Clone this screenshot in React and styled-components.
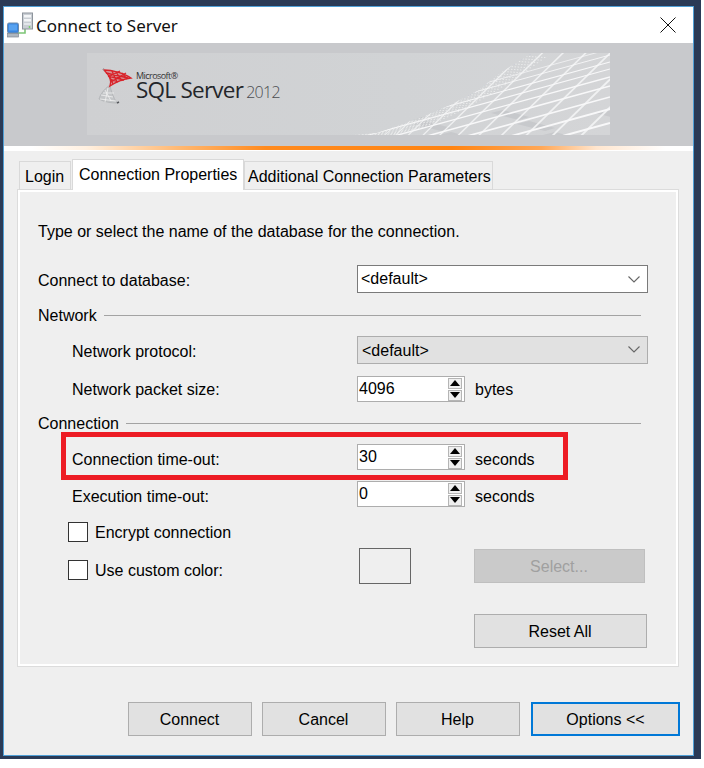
import React from "react";
import styled, { createGlobalStyle } from "styled-components";

const Global = createGlobalStyle`
  html, body { margin: 0; padding: 0; background: #fff; }
  * { box-sizing: border-box; }
  body { font-family: "Liberation Sans", Arial, sans-serif; font-size: 16px; color: #000; }
`;

const Desktop = styled.div`
  width: 701px; height: 759px; background: #2a3a56;
  padding: 6px 7px 3px 3px;
`;
const Win = styled.div`
  width: 691px; height: 750px; border: 1px solid #4f9fd6; background: #efefef;
  display: flex; flex-direction: column; position: relative;
`;
const TitleBar = styled.div`
  height: 36px; background: #fff; display: flex; align-items: center;
  padding: 0 17px 0 3px; flex: none;
`;
const TitleText = styled.div`
  font-family: "Noto Sans", sans-serif; font-size: 17px; margin-left: 0; flex: 1; padding-top: 1px; letter-spacing: -0.03px; color: #111;
`;
const Banner = styled.div`
  height: 103px; background: #c8c9cc; padding: 10px 0 0 83px; flex: none;
`;
const BannerInner = styled.div`
  width: 523px; height: 82px; position: relative;
  background: linear-gradient(90deg, #cfd0d2 0%, #d1d3d5 60%, #d4d5d7 100%);
  display: flex; align-items: flex-start; overflow: hidden;
`;
const Mesh = styled.svg`
  position: absolute; left: 0; top: 0;
`;
const Logo = styled.div`
  display: flex; align-items: flex-start; padding: 14px 0 0 11px; position: relative;
`;
const Brand = styled.div`
  display: flex; flex-direction: column; margin-left: 1px; color: #26282b;
`;
const Microsoft = styled.div`
  font-family: "Open Sans", sans-serif; font-size: 9px; line-height: 10px; letter-spacing: -0.55px; height: 10px; margin-top: 4px; color: #333;
`;
const BrandLine = styled.div`
  display: flex; align-items: baseline; height: 18px; font-family: "Open Sans", sans-serif;
`;
const SqlName = styled.span`
  font-size: 22.5px; line-height: 18px; letter-spacing: -0.75px; color: #24262a;
`;
const Year = styled.span`
  font-size: 16px; line-height: 18px; font-weight: 300; letter-spacing: -0.7px; margin-left: 3px; color: #4a4c50;
`;
const Rule = styled.div`
  height: 5px; flex: none; background: #fff; display: flex;
`;
const RuleGlow = styled.div`
  height: 4px; width: 100%;
  background: linear-gradient(90deg, #fff 4%, #fff0e0 12%, #ffb66e 26%, #ff8a1e 38%, #ff8412 65%, #ffa858 78%, #ffe6cf 86%, #fff 96%);
`;
const Body = styled.div`
  flex: 1; padding: 8px 0 0 13px; display: flex; flex-direction: column;
`;
const Tabs = styled.div`
  display: flex; height: 31px; padding-left: 2px; align-items: flex-end; margin-bottom: -1px; position: relative; z-index: 1;
`;
const Tab = styled.div`
  height: ${p => (p.$active ? 31 : 29)}px;
  width: ${p => p.$w}px;
  margin-left: ${p => (p.$gap ? 1 : 0)}px;
  background: ${p => (p.$active ? "#fff" : "#efefef")};
  border: 1px solid #d9d9d9;
  border-bottom: ${p => (p.$active ? "none" : "1px solid #d9d9d9")};
  display: flex; align-items: center;
  padding: ${p => (p.$active ? "0 0 1px" : "3px 0 0")};
  padding-left: ${p => p.$pad}px;
  white-space: nowrap;
`;
const Panel = styled.div`
  width: 662px; height: 478px; border: 1px solid #dcdcdc; box-shadow: inset 0 0 0 2px #fff;
  padding: 0 30px 0 20px; flex: none; display: flex; flex-direction: column;
`;
const Row = styled.div`
  display: flex; align-items: center; height: ${p => p.$h}px; margin-top: ${p => p.$top}px; flex: none;
  padding-left: ${p => p.$indent || 0}px;
`;
const Intro = styled.div`
  padding-top: 2px; white-space: nowrap;
`;
const Label = styled.div`
  width: ${p => p.$w}px; flex: none; padding-top: ${p => p.$drop || 0}px; white-space: nowrap;
`;
const Heading = styled.div`
  white-space: nowrap; margin-right: 7px; padding-top: 2px;
`;
const HeadLine = styled.div`
  flex: 1; height: 1px; background: #a3a3a3; margin-right: 7px; margin-top: 1px;
`;
const Combo = styled.div`
  width: 291px; height: 28px; flex: none;
  background: ${p => (p.$gray ? "#e1e1e1" : "#fff")};
  border: 1px solid ${p => (p.$gray ? "#adadad" : "#7a7a7a")};
  display: flex; align-items: center; justify-content: space-between;
  padding: ${p => (p.$gray ? "1px 7px 0 4px" : "0 7px 1px 3px")};
`;
const Chevron = styled.svg`
  flex: none; margin-top: ${p => p.$mt}px;
`;
const Spin = styled.div`
  width: 108px; height: 26px; flex: none; background: #fff; border: 1px solid #adadad;
  display: flex; align-items: center; justify-content: space-between; padding: 0 2px 1px 1px;
`;
const SpinValue = styled.div`
  padding-top: 1px;
`;
const SpinBtns = styled.div`
  width: 14px; display: flex; flex-direction: column; gap: 1px; margin-top: 1px;
`;
const SpinBtn = styled.div`
  width: 14px; height: 11px; background: #efefef; border: 1px solid #b5b5b5; display: flex; align-items: center; justify-content: center;
`;
const Unit = styled.div`
  margin-left: 10px; padding-top: ${p => p.$drop || 0}px; white-space: nowrap;
`;
const Check = styled.div`
  width: 20px; height: 20px; background: #fff; border: 1px solid #333; flex: none; margin-right: 7px;
`;
const CheckText = styled.div`
  padding-top: 2px; white-space: nowrap;
`;
const CheckGroup = styled.div`
  display: flex; align-items: center; margin-top: ${p => p.$top || 0}px; width: ${p => p.$w}px; flex: none;
`;
const ColorBox = styled.div`
  width: 52px; height: 36px; border: 1px solid #666; flex: none; margin-right: 63px;
`;
const Button = styled.div`
  width: ${p => p.$w}px; height: 34px; flex: none;
  background: ${p => (p.$off ? "#cacaca" : "#e1e1e1")};
  border: ${p => (p.$focus ? "2px solid #0078d7" : p.$off ? "1px solid #bfbfbf" : "1px solid #adadad")};
  color: ${p => (p.$off ? "#a0a0a0" : "#000")};
  margin-left: ${p => p.$ml || 0}px;
  display: flex; align-items: center; justify-content: center;
  padding: 2px ${p => (p.$focus ? 0 : 1)}px 0 0;
`;
const Footer = styled.div`
  display: flex; gap: 10px; margin-top: 35px; padding-left: 111px;
`;
const RedFrame = styled.div`
  position: absolute; left: 57px; top: 425px; width: 507px; height: 48px; border: 5px solid #ed1c24;
`;

const Arrow = ({ up }) => (
  <svg width="10" height="6" viewBox="0 0 10 6">
    <polygon points={up ? "5,0 10,6 0,6" : "0,0 10,0 5,6"} fill="#000" />
  </svg>
);

const Spinner = ({ value }) => (
  <Spin>
    <SpinValue>{value}</SpinValue>
    <SpinBtns>
      <SpinBtn><Arrow up /></SpinBtn>
      <SpinBtn><Arrow /></SpinBtn>
    </SpinBtns>
  </Spin>
);

const Down = ({ mt }) => (
  <Chevron $mt={mt} width="12" height="7" viewBox="0 0 12 7">
    <path d="M0.5 0.5 L6 6 L11.5 0.5" fill="none" stroke="#666" strokeWidth="1.1" />
  </Chevron>
);

const ServerIcon = () => (
  <svg width="29" height="26" viewBox="0 0 29 26" style={{ flex: "none" }}>
    <path d="M18 17 V21 H10" fill="none" stroke="#7cc576" strokeWidth="1.6" />
    <rect x="15.5" y="1" width="10" height="16" fill="#c9ced4" stroke="#8d949c" />
    <rect x="17" y="3" width="7" height="2.5" fill="#f3f5f7" />
    <rect x="17" y="7" width="7" height="2.5" fill="#f3f5f7" />
    <rect x="17" y="11" width="7" height="2" fill="#e2e6ea" />
    <circle cx="22.5" cy="15" r="0.9" fill="#6fcf5f" />
    <rect x="0.5" y="11" width="11" height="10" rx="1.5" fill="#3a86e0" stroke="#6d8bab" />
    <rect x="2" y="12.5" width="8" height="6" fill="#57a2f0" />
    <rect x="0.5" y="21.5" width="11" height="3.5" fill="#aeb6bf" stroke="#7f8892" strokeWidth="0.7" />
  </svg>
);

const CloseIcon = () => (
  <svg width="16" height="16" viewBox="0 0 16 16" style={{ flex: "none" }}>
    <path d="M0.5 0.5 L15.5 15.5 M15.5 0.5 L0.5 15.5" stroke="#111" strokeWidth="1" />
  </svg>
);

const SqlLogo = () => (
  <svg width="37" height="38" viewBox="0 0 37 38" style={{ flex: "none" }}>
    <g fill="none" stroke="#b0b2b5" strokeWidth="0.8">
      <path d="M12 18 C6 22 2 28 1 32 C6 35 13 36 19 36 C15 30 13 24 12 18 Z" fill="#c4c6c8" />
      <path d="M3 28 L15 30 M2 32 L18 34 M7 23 L13 34 M10 21 L7 35 M5 26 L16 26" stroke="#f1f1f1" />
    </g>
    <path d="M19 36 l2 -1" stroke="#55585c" strokeWidth="1.4" />
    <g fill="none" stroke="#d8232a" strokeWidth="1.3">
      <path d="M6 3 C14 3 26 6 33 11 C24 12 18 15 12 19 C14 14 11 8 6 3 Z" fill="#e2474d" fillOpacity="0.45" />
      <path d="M8 6 L30 11 M10 9 L26 13 M12 12 L20 15 M13 15 L28 6 M12 9 L22 4 M18 5 L24 14 M24 6 L29 12 M10 6 L15 17 M14 4 L19 15" />
    </g>
    <path d="M6 1 C5 2 5 3 6 4" stroke="#9a9c9f" strokeWidth="1" fill="none" />
  </svg>
);

const W = 523, H = 82;
const curve = "265,82 290,80 313,72 340,62 363,52 390,38 413,20 445,0 523,0 523,82";

const MeshArt = () => {
  const a = [-4, 2, 9, 16, 24, 33, 44, 56, 70, 85, 102, 122];
  const b = [], c = [], d = [];
  for (let i = 0; i < 13; i++) {
    const t = i / 12;
    b.push(296 + 260 * t * (0.45 + 0.55 * t));
  }
  for (let i = 0; i < 9; i++) {
    d.push({ x: 300 + i * 26, y: 40 + (i % 4) * 11 });
  }
  for (let i = 0; i < 46; i++) {
    c.push({ x1: 268 + i * 3.6, y1: 82 - Math.pow(i / 46, 1.5) * 82 });
  }
  return (
    <Mesh width={W} height={H} viewBox={`0 0 ${W} ${H}`}>
      <defs>
        <clipPath id="meshClip"><polygon points={curve} /></clipPath>
      </defs>
      <g clipPath="url(#meshClip)">
        {d.map((p, i) => (
          <path key={i} d={`M${p.x} ${p.y + 20} l28 7 l10 -3 l-26 -7 z`} fill="#bfc1c4" opacity="0.6" />
        ))}
        {b.map((x, i) => (
          <line key={i} x1={x} y1={84} x2={x + 100} y2={-14} stroke="#f3f4f5" strokeWidth={0.9 + (i / 12) * 1.3} opacity={0.9} />
        ))}
        {a.map((y, i) => (
          <line key={i} x1={523} y1={y} x2={223} y2={y + 82} stroke="#f8f8f9" strokeWidth={0.7 + (i / 11) * 1.8} />
        ))}
        {c.map((p, i) => (
          <line key={i} x1={p.x1} y1={p.y1} x2={p.x1 + 30} y2={p.y1 + 2} stroke="#eceded" strokeWidth="0.9" strokeDasharray="1.5 1.5" />
        ))}
      </g>
    </Mesh>
  );
};

export default function App() {
  return (
    <>
      <Global />
      <Desktop>
        <Win>
          <TitleBar>
            <ServerIcon />
            <TitleText>Connect to Server</TitleText>
            <CloseIcon />
          </TitleBar>
          <Banner>
            <BannerInner>
              <MeshArt />
              <Logo>
                <SqlLogo />
                <Brand>
                  <Microsoft>Microsoft®</Microsoft>
                  <BrandLine>
                    <SqlName>SQL Server</SqlName>
                    <Year>2012</Year>
                  </BrandLine>
                </Brand>
              </Logo>
            </BannerInner>
          </Banner>
          <Rule><RuleGlow /></Rule>
          <Body>
            <Tabs>
              <Tab $w={52} $pad={5}>Login</Tab>
              <Tab $active $gap $w={172} $pad={6}>Connection Properties</Tab>
              <Tab $w={249} $pad={3}>Additional Connection Parameters</Tab>
            </Tabs>
            <Panel>
              <Row $h={24} $top={29}><Intro>Type or select the name of the database for the connection.</Intro></Row>
              <Row $h={28} $top={22}>
                <Label $w={319} $drop={4}>Connect to database:</Label>
                <Combo>&lt;default&gt;<Down mt={2} /></Combo>
              </Row>
              <Row $h={20} $top={12}>
                <Heading>Network</Heading>
                <HeadLine />
              </Row>
              <Row $h={28} $top={11} $indent={34}>
                <Label $w={285} $drop={4}>Network protocol:</Label>
                <Combo $gray>&lt;default&gt;<Down mt={-2} /></Combo>
              </Row>
              <Row $h={26} $top={12} $indent={34}>
                <Label $w={285} $drop={2}>Network packet size:</Label>
                <Spinner value="4096" />
                <Unit $drop={2}>bytes</Unit>
              </Row>
              <Row $h={20} $top={11}>
                <Heading>Connection</Heading>
                <HeadLine />
              </Row>
              <Row $h={26} $top={11} $indent={34}>
                <Label $w={285} $drop={6}>Connection time-out:</Label>
                <Spinner value="30" />
                <Unit $drop={6}>seconds</Unit>
              </Row>
              <Row $h={26} $top={11} $indent={34}>
                <Label $w={285} $drop={6}>Execution time-out:</Label>
                <Spinner value="0" />
                <Unit $drop={6}>seconds</Unit>
              </Row>
              <Row $h={20} $top={15} $indent={30}>
                <Check /><CheckText>Encrypt connection</CheckText>
              </Row>
              <Row $h={36} $top={6} $indent={30}>
                <CheckGroup $top={8} $w={291}>
                  <Check /><CheckText>Use custom color:</CheckText>
                </CheckGroup>
                <ColorBox />
                <Button $off $w={171}>Select...</Button>
              </Row>
              <Row $h={34} $top={30} $indent={436}>
                <Button $w={173}>Reset All</Button>
              </Row>
            </Panel>
            <Footer>
              <Button $w={124}>Connect</Button>
              <Button $w={124}>Cancel</Button>
              <Button $w={124}>Help</Button>
              <Button $w={149} $focus $ml={1}>Options &lt;&lt;</Button>
            </Footer>
          </Body>
          <RedFrame />
        </Win>
      </Desktop>
    </>
  );
}
